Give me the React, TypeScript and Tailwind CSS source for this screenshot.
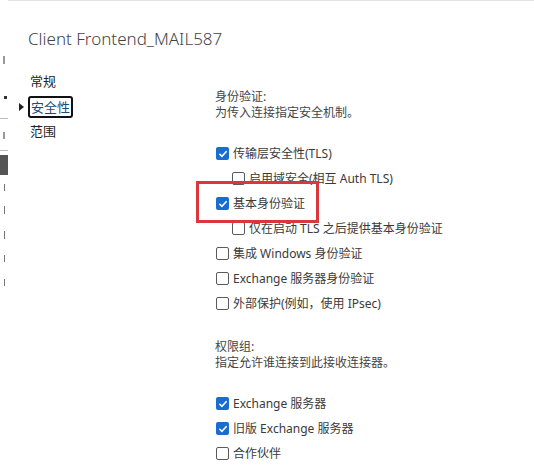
import type { ReactNode } from 'react'

const FONT = { fontFamily: '"Noto Sans", "Noto Sans CJK SC", sans-serif' }

function Box({ checked }: { checked?: boolean }) {
  if (checked) {
    return (
      <span className="flex size-[13px] shrink-0 items-center justify-center rounded-[2px] bg-[#1a6dd0]">
        <svg viewBox="0 0 12 12" className="size-[10px]">
          <path d="M2.2 6.3 4.8 8.8 9.8 3.2" fill="none" stroke="white" strokeWidth="1.9" strokeLinecap="round" strokeLinejoin="round" />
        </svg>
      </span>
    )
  }
  return <span className="size-[13px] shrink-0 rounded-[2px] border border-[#5a5a5a] bg-white" />
}

function Row({ checked, indent, children }: { checked?: boolean; indent?: boolean; children: ReactNode }) {
  return (
    <div className={`flex h-[25px] items-center gap-[4px] ${indent ? 'pl-[17px]' : 'pl-[1px]'}`}>
      <Box checked={checked} />
      <span className="text-[12px] leading-none text-[#3a3a3a]">{children}</span>
    </div>
  )
}

// scraps of the page behind the dialog, visible at the left edge
function BehindStrip() {
  return (
    <div className="flex w-[8px] shrink-0 flex-col">
      <div className="ml-[3px] mt-[56px] h-[8px] w-[2px] bg-[#999]" />
      <div className="ml-[4px] mt-[32px] size-[3px] bg-[#333]" />
      <div className="mt-[19px] h-px bg-[#bbb]" />
      <div className="ml-[3px] mt-[13px] h-[7px] w-[2px] bg-[#999]" />
      <div className="mt-[11px] h-px bg-[#bbb]" />
      <div className="mt-[4px] h-[20px] bg-[#555]" />
      <div className="ml-[4px] mt-[9px] h-[7px] w-px bg-[#777]" />
      <div className="ml-[4px] mt-[15px] h-[8px] w-px bg-[#777]" />
      <div className="ml-[4px] mt-[17px] h-[8px] w-px bg-[#777]" />
      <div className="ml-[4px] mt-[16px] h-[7px] w-px bg-[#777]" />
      <div className="ml-[4px] mt-[17px] h-[7px] w-px bg-[#777]" />
    </div>
  )
}

export default function App() {
  return (
    <div className="relative flex h-[468px] w-[534px] overflow-hidden bg-white" style={FONT}>
      <BehindStrip />

      <div className="h-full flex-1 border-t border-[#e3e3e3] pl-[20px] pt-[26px]">
        <h1 className="text-[17px] font-light leading-[24px] text-[#444]">Client Frontend_MAIL587</h1>

        <div className="mt-[18px] flex">
          <nav className="w-[187px] shrink-0 text-[13px] text-[#222]">
            <div className="flex h-[25px] items-center pl-[2px]">常规</div>
            <div className="relative flex h-[25px] items-center">
              <span className="absolute left-[-9px] top-[9px] h-0 w-0 border-y-[4px] border-l-[5px] border-y-transparent border-l-[#222]" />
              <span className="rounded-[3px] border-2 border-[#111] px-[1px] leading-[18px] text-[#1d4a7c]">安全性</span>
            </div>
            <div className="flex h-[25px] items-center pl-[2px]">范围</div>
          </nav>

          <div className="pt-[20px] text-[12px] text-[#444]">
            <p className="leading-[16px]">身份验证:</p>
            <p className="leading-[16px]">为传入连接指定安全机制。</p>
            <div className="mt-[20px]">
              <Row checked>传输层安全性(TLS)</Row>
              <Row indent>启用域安全(相互 Auth TLS)</Row>
              <Row checked>基本身份验证</Row>
              <Row indent>仅在启动 TLS 之后提供基本身份验证</Row>
              <Row>集成 Windows 身份验证</Row>
              <Row>Exchange 服务器身份验证</Row>
              <Row>外部保护(例如，使用 IPsec)</Row>
            </div>

            <p className="mt-[23px] leading-[16px]">权限组:</p>
            <p className="leading-[16px]">指定允许谁连接到此接收连接器。</p>
            <div className="mt-[20px]">
              <Row checked>Exchange 服务器</Row>
              <Row checked>旧版 Exchange 服务器</Row>
              <Row>合作伙伴</Row>
            </div>
          </div>
        </div>
      </div>

      {/* red annotation frame drawn over the screenshot */}
      <div className="absolute left-[196px] top-[181px] h-[42px] w-[123px] border-[3px] border-[#d9363e]" />
    </div>
  )
}
